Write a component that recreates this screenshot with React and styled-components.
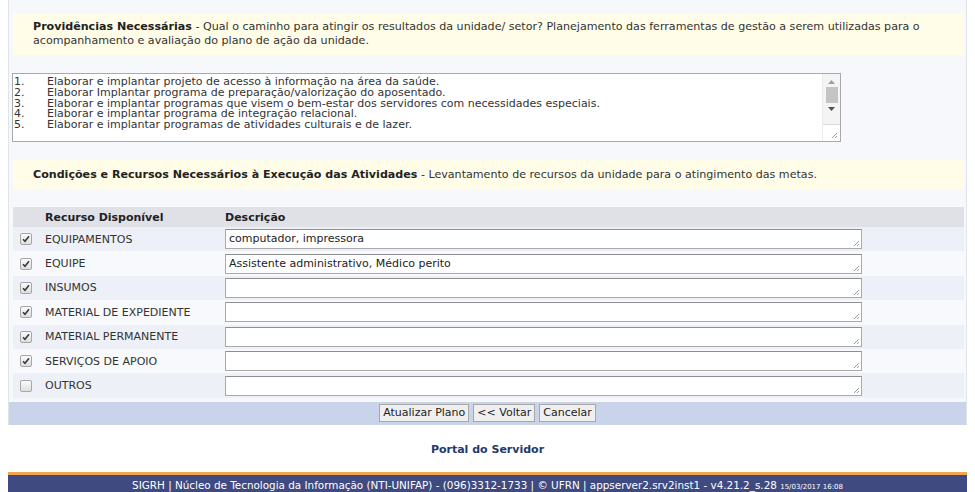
import styled, { createGlobalStyle } from 'styled-components';

const GlobalStyle = createGlobalStyle`
  body {
    margin: 0;
    background: #ffffff;
    font-family: Verdana, "DejaVu Sans", sans-serif;
    font-size: 11px;
    color: #222;
  }
`;

const Page = styled.div`
  padding: 0 8px;
`;

const Panel = styled.div`
  background: #f6f8fb;
  border-left: 1px solid #dfe3ea;
  border-right: 1px solid #dfe3ea;
  padding-top: 13px;
`;

const Inner = styled.div`
  padding: 0 2px 4px 4px;
`;

const Notice = styled.div`
  background: #fffde8;
  padding: ${(p) => (p.$single ? '8px 20px' : '7px 20px')};
  font-size: 11.1px;
  line-height: 14px;
  color: #333;
  margin-bottom: ${(p) => p.$gap || 18}px;

  b {
    color: #222;
  }
`;

const TextBox = styled.div`
  display: flex;
  width: 829px;
  height: 69px;
  margin-left: -1px;
  margin-bottom: 18px;
  background: #fff;
  border: 1px solid #a9a9a9;
  box-sizing: border-box;
`;

const Lines = styled.div`
  flex: 1;
  padding: 3px 0 0 1px;
  line-height: 10.8px;
  color: #333;
  overflow: hidden;
`;

const Line = styled.div`
  display: flex;
  white-space: nowrap;
`;

const Num = styled.span`
  width: 33px;
  flex: none;
`;

const ScrollCol = styled.div`
  width: 17px;
  display: flex;
  flex-direction: column;
  border-left: 1px solid #ececec;
`;

const Track = styled.div`
  flex: 1;
  background: #f4f4f4;
  display: flex;
  flex-direction: column;
  align-items: center;
  padding-top: 6px;
`;

const Thumb = styled.div`
  width: 12px;
  height: 16px;
  background: #c4c4c4;
  margin: 3px 0 4px;
`;

const Corner = styled.div`
  height: 17px;
  border-top: 1px solid #dcdcdc;
  display: flex;
  align-items: flex-end;
  justify-content: flex-end;
  padding: 0 2px 2px 0;
  box-sizing: border-box;
`;

const Grid = styled.div`
  display: flex;
  flex-direction: column;
`;

const Row = styled.div`
  display: grid;
  grid-template-columns: 32px 180px 637px 1fr;
  align-items: center;
  height: ${(p) => (p.$head ? '20px' : '24.4px')};
  background: ${(p) => (p.$head ? '#dfe1e6' : p.$odd ? '#edf1f7' : '#f7f9fc')};
  font-weight: ${(p) => (p.$head ? 'bold' : 'normal')};
  color: ${(p) => (p.$head ? '#222' : '#333')};
`;

const CheckCell = styled.div`
  padding-left: 7px;
  display: flex;
`;

const Check = styled.span`
  width: 12px;
  height: 12px;
  box-sizing: border-box;
  border: 1px solid #a6a6a6;
  border-radius: 2px;
  background: linear-gradient(#fbfbfb, #dedede);
  display: flex;
  align-items: center;
  justify-content: center;
`;

const FieldWrap = styled.div`
  position: relative;
  height: 20px;
`;

const Field = styled.textarea`
  display: block;
  width: 100%;
  height: 20px;
  box-sizing: border-box;
  border: 1px solid #a9a9a9;
  border-top-color: #8f8f8f;
  background: #fff;
  padding: 2px 3px;
  font-family: Verdana, "DejaVu Sans", sans-serif;
  font-size: 11px;
  line-height: 14px;
  color: #222;
  resize: none;
  overflow: hidden;
  outline: none;
`;

const Grip = styled.span`
  position: absolute;
  right: 2px;
  bottom: 2px;
  display: flex;
`;

const ButtonBar = styled.div`
  background: #c9d3ea;
  display: flex;
  justify-content: center;
  gap: 4px;
  padding: 2px 0 3px;
`;

const Button = styled.button`
  height: 18px;
  padding: 0 3px;
  font-family: Verdana, "DejaVu Sans", sans-serif;
  font-size: 11px;
  color: #222;
  background: #efefef;
  border: 1px solid #a8a8a8;
  border-radius: 0;
`;

const PortalLink = styled.div`
  text-align: center;
  font-weight: bold;
  font-size: 11px;
  color: #1f3a6e;
  line-height: 14px;
  padding: 18px 0 15px;
`;

const Footer = styled.div`
  border-top: 3px solid #f0a54e;
  background: #3f4b80;
  color: #fff;
  text-align: center;
  font-size: 10.4px;
  line-height: 14px;
  padding: 3px 0 6px;

  small {
    font-size: 7px;
  }
`;

const actions = [
  'Elaborar e implantar projeto de acesso à informação na área da saúde.',
  'Elaborar Implantar programa de preparação/valorização do aposentado.',
  'Elaborar e implantar programas que visem o bem-estar dos servidores com necessidades especiais.',
  'Elaborar e implantar programa de integração relacional.',
  'Elaborar e implantar programas de atividades culturais e de lazer.',
];

const resources = [
  { name: 'EQUIPAMENTOS', desc: 'computador, impressora', checked: true },
  { name: 'EQUIPE', desc: 'Assistente administrativo, Médico perito', checked: true },
  { name: 'INSUMOS', desc: '', checked: true },
  { name: 'MATERIAL DE EXPEDIENTE', desc: '', checked: true },
  { name: 'MATERIAL PERMANENTE', desc: '', checked: true },
  { name: 'SERVIÇOS DE APOIO', desc: '', checked: true },
  { name: 'OUTROS', desc: '', checked: false },
];

const GripIcon = () => (
  <svg width="7" height="7" viewBox="0 0 7 7">
    <path d="M1 6 L6 1 M4 6 L6 4" stroke="#9a9a9a" strokeWidth="1" />
  </svg>
);

const App = () => {
  return (
    <Page>
      <GlobalStyle />
      <Panel>
        <Inner>
          <Notice>
            <b>Providências Necessárias</b> - Qual o caminho para atingir os resultados da unidade/ setor? Planejamento das ferramentas de gestão a serem utilizadas para o acompanhamento e avaliação do plano de ação da unidade.
          </Notice>

          <TextBox>
            <Lines>
              {actions.map((a, i) => (
                <Line key={i}>
                  <Num>{i + 1}.</Num>
                  {a}
                </Line>
              ))}
            </Lines>
            <ScrollCol>
              <Track>
                <svg width="7" height="4" viewBox="0 0 7 4">
                  <path d="M0 4 L3.5 0 L7 4 Z" fill="#a0a0a0" />
                </svg>
                <Thumb />
                <svg width="7" height="4" viewBox="0 0 7 4">
                  <path d="M0 0 L3.5 4 L7 0 Z" fill="#505050" />
                </svg>
              </Track>
              <Corner>
                <GripIcon />
              </Corner>
            </ScrollCol>
          </TextBox>

          <Notice $single $gap={17}>
            <b>Condições e Recursos Necessários à Execução das Atividades</b> - Levantamento de recursos da unidade para o atingimento das metas.
          </Notice>

          <Grid>
            <Row $head>
              <span />
              <span>Recurso Disponível</span>
              <span>Descrição</span>
              <span />
            </Row>
            {resources.map((r, i) => (
              <Row key={r.name} $odd={i % 2 === 0}>
                <CheckCell>
                  <Check>
                    {r.checked && (
                      <svg width="8" height="8" viewBox="0 0 8 8">
                        <path d="M1 4.2 L3 6.3 L7 1.3" fill="none" stroke="#3a3a3a" strokeWidth="1.6" />
                      </svg>
                    )}
                  </Check>
                </CheckCell>
                <span>{r.name}</span>
                <FieldWrap>
                  <Field defaultValue={r.desc} readOnly />
                  <Grip>
                    <GripIcon />
                  </Grip>
                </FieldWrap>
                <span />
              </Row>
            ))}
          </Grid>
        </Inner>

        <ButtonBar>
          <Button>Atualizar Plano</Button>
          <Button>&lt;&lt; Voltar</Button>
          <Button>Cancelar</Button>
        </ButtonBar>
      </Panel>

      <PortalLink>Portal do Servidor</PortalLink>

      <Footer>
        SIGRH | Núcleo de Tecnologia da Informação (NTI-UNIFAP) - (096)3312-1733 | © UFRN | appserver2.srv2inst1 - v4.21.2_s.28 <small>15/03/2017 16:08</small>
      </Footer>
    </Page>
  );
};

export default App;
